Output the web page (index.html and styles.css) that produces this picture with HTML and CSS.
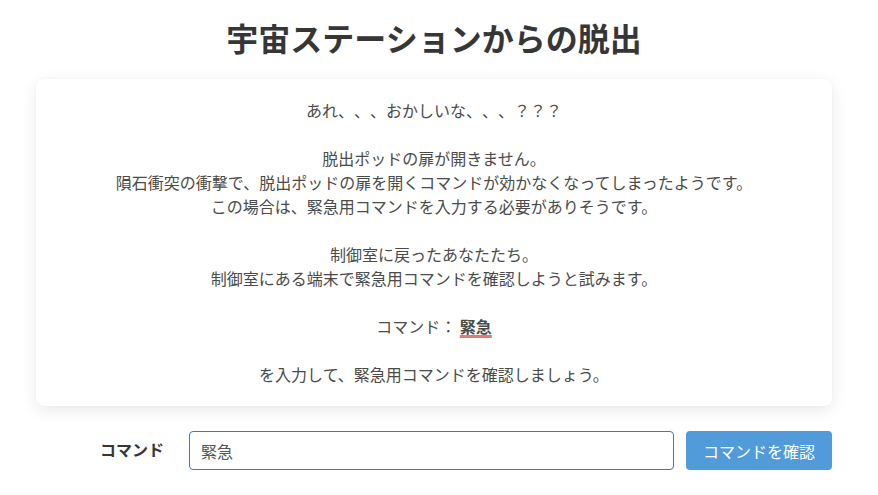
FILE: index.html
```html
<!DOCTYPE html>
<html lang="ja">
<head>
<meta charset="utf-8">
<title>宇宙ステーションからの脱出</title>
<link rel="stylesheet" href="styles.css">
</head>
<body>
<div class="page">
  <h1 class="title">宇宙ステーションからの脱出</h1>
  <div class="card">
    <p>あれ、、、おかしいな、、、？？？</p>
    <p class="gap"></p>
    <p>脱出ポッドの扉が開きません。</p>
    <p>隕石衝突の衝撃で、脱出ポッドの扉を開くコマンドが効かなくなってしまったようです。</p>
    <p>この場合は、緊急用コマンドを入力する必要がありそうです。</p>
    <p class="gap"></p>
    <p>制御室に戻ったあなたたち。</p>
    <p>制御室にある端末で緊急用コマンドを確認しようと試みます。</p>
    <p class="gap"></p>
    <p>コマンド： <span class="cmd">緊急</span></p>
    <p class="gap"></p>
    <p>を入力して、緊急用コマンドを確認しましょう。</p>
  </div>
  <form class="row">
    <label class="label" for="cmd">コマンド</label>
    <input class="input" id="cmd" type="text" value="緊急">
    <button class="btn" type="button">コマンドを確認</button>
  </form>
</div>
</body>
</html>
```
FILE: styles.css
```css
html, body {
  margin: 0;
  padding: 0;
  background: #ffffff;
}
body {
  font-family: "Noto Sans CJK JP", "Noto Sans", sans-serif;
  color: #4a4a4a;
  text-spacing-trim: space-all;
}
.page {
  width: 796px;
  margin-left: 36px;
}
.title {
  margin: 18px 0 23px;
  font-size: 32px;
  line-height: 38px;
  font-weight: 700;
  color: #363636;
  text-align: center;
}
.card {
  background: #fff;
  border-radius: 8px;
  box-shadow: 0 4px 16px rgba(0, 0, 0, 0.09), 0 0 2px rgba(0, 0, 0, 0.04);
  padding: 19px 20px 20px;
  text-align: center;
}
.card p {
  margin: 0;
  font-size: 16px;
  line-height: 24px;
  height: 24px;
  color: #4a4a4a;
  text-spacing-trim: space-all;
}
.cmd {
  font-weight: 700;
  text-decoration: underline;
  text-decoration-color: #e37a7a;
  text-decoration-thickness: 3px;
  text-underline-offset: 2px;
}
.row {
  display: grid;
  grid-template-columns: 141px 1fr 146px;
  column-gap: 12px;
  align-items: center;
  margin-top: 25px;
}
.label {
  font-size: 16px;
  font-weight: 700;
  color: #363636;
  text-align: right;
  padding-right: 13px;
  margin-top: -4px;
}
.input {
  box-sizing: border-box;
  height: 39px;
  border: 1px solid #3d72d6;
  border-radius: 4px;
  padding: 0 11px;
  font-family: "Noto Sans CJK JP", "Noto Sans", sans-serif;
  font-size: 16px;
  color: #555;
  outline: none;
  width: 100%;
}
.btn {
  box-sizing: border-box;
  height: 39px;
  border: none;
  border-radius: 4px;
  background: #519bda;
  color: #fff;
  font-family: "Noto Sans CJK JP", "Noto Sans", sans-serif;
  font-size: 16px;
  padding: 0;
}
```
